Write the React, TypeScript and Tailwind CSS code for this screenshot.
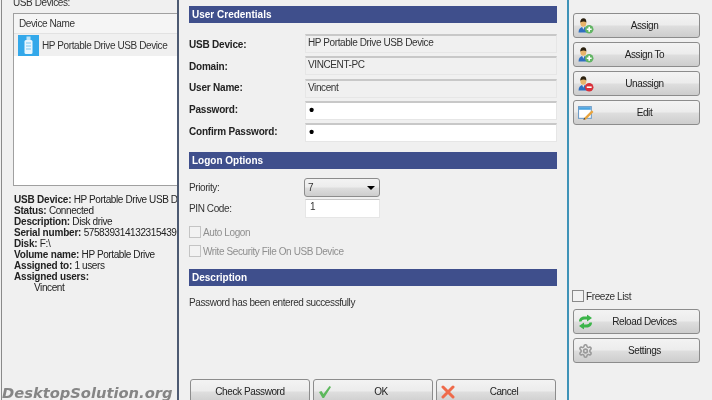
import React from "react";

const FONT = "font-['Liberation_Sans','Noto_Sans',sans-serif]";

function UserIcon({ kind }: { kind: "add" | "remove" }) {
  return (
    <svg width="16" height="16" viewBox="0 0 15 15" className="block">
      <path d="M0.500 13.500c0-3.200 1.700-5 4.500-5s4.500 1.800 4.500 5z" fill="#2f6fc0" />
      <path d="M4 8.500h2L5 11z" fill="#e8e8e8" />
      <ellipse cx="5" cy="4.700" rx="2.800" ry="3.500" fill="#e9b46a" />
      <path d="M2.100 4.200c0-2.500 1.300-3.900 3.100-3.900S8 1.700 7.800 4.200C6.500 3 4 3 2.100 4.200z" fill="#2b2110" />
      <circle cx="10.500" cy="10.500" r="4" fill={kind === "add" ? "#62b564" : "#d8303a"} />
      {kind === "add" ? (
        <path d="M10.500 8.200v4.600M8.200 10.500h4.600" stroke="#fff" strokeWidth="1.500" />
      ) : (
        <path d="M8.200 10.500h4.600" stroke="#fff" strokeWidth="1.500" />
      )}
    </svg>
  );
}

function EditIcon() {
  return (
    <svg width="16" height="16" viewBox="0 0 15 15" className="block">
      <rect x="0.500" y="1.500" width="12" height="11" fill="#fff" stroke="#6d9cc8" />
      <rect x="1" y="2" width="11" height="2.500" fill="#4aa3e0" />
      <path d="M6 12l7-7 1.500 1.500-7 7-2 .5z" fill="#e8a33c" />
      <path d="M5 14l.8-2 1.200 1.200z" fill="#444" />
    </svg>
  );
}

function ReloadIcon() {
  return (
    <svg width="15" height="15" viewBox="0 0 15 15" className="block">
      <path d="M1 7C1 3.800 3.500 2 6.500 2H9V0l5 3.500L9 7V5H6.500C4.800 5 3.800 5.800 3.500 7z" fill="#3cb54a" />
      <path d="M14 8c0 3.200-2.500 5-5.500 5H6v2l-5-3.500L6 8v2h2.500c1.700 0 2.700-.8 3-2z" fill="#3cb54a" />
    </svg>
  );
}

function GearIcon() {
  return (
    <svg width="15" height="15" viewBox="0 0 24 24" fill="none" stroke="#9a9a9a" strokeWidth="2.500" className="block">
      <path d="M12.220 2h-.44a2 2 0 0 0-2 2v.18a2 2 0 0 1-1 1.730l-.43.250a2 2 0 0 1-2 0l-.15-.080a2 2 0 0 0-2.730.730l-.22.380a2 2 0 0 0 .730 2.730l.150.100a2 2 0 0 1 1 1.720v.510a2 2 0 0 1-1 1.740l-.150.090a2 2 0 0 0-.730 2.730l.220.380a2 2 0 0 0 2.730.730l.150-.080a2 2 0 0 1 2 0l.43.250a2 2 0 0 1 1 1.730V20a2 2 0 0 0 2 2h.440a2 2 0 0 0 2-2v-.18a2 2 0 0 1 1-1.730l.43-.250a2 2 0 0 1 2 0l.15.080a2 2 0 0 0 2.730-.730l.22-.390a2 2 0 0 0-.730-2.730l-.150-.080a2 2 0 0 1-1-1.740v-.500a2 2 0 0 1 1-1.740l.150-.090a2 2 0 0 0 .730-2.730l-.220-.380a2 2 0 0 0-2.730-.730l-.150.080a2 2 0 0 1-2 0l-.43-.250a2 2 0 0 1-1-1.730V4a2 2 0 0 0-2-2z" />
      <circle cx="12" cy="12" r="3" />
    </svg>
  );
}

function CheckIcon() {
  return (
    <svg width="14" height="14" viewBox="0 0 14 14" className="block">
      <path d="M1 7l2.500-1 2 3L11.500 1 13 2 6 13H4.500z" fill="#5cb85c" />
    </svg>
  );
}

function CrossIcon() {
  return (
    <svg width="14" height="14" viewBox="0 0 14 14" className="block">
      <path d="M2 2l10 10M12 2L2 12" stroke="#ef6a4a" strokeWidth="3" strokeLinecap="round" />
    </svg>
  );
}

function UsbIcon() {
  return (
    <div className="w-[21px] h-[21px] bg-[#33a8ea] flex items-center justify-center shrink-0">
      <svg width="9" height="19" viewBox="0 0 9 19">
        <rect x="2.500" y="0.500" width="4" height="4" fill="#bfe5fa" />
        <rect x="0.500" y="4" width="8" height="14" rx="1.500" fill="#e8f6fe" />
        <path d="M2 7h5M2 10h5M2 13h5" stroke="#7cc6f0" strokeWidth="1" />
      </svg>
    </div>
  );
}

function Btn({ icon, label, className }: { icon?: React.ReactNode; label: string; className: string }) {
  return (
    <div
      className={`relative flex items-center justify-center border border-[#8c8c8c] rounded-[3px] bg-[linear-gradient(#f3f3f3,#ececec_48%,#dedede_52%,#cdcdcd)] text-[10px] tracking-[-0.4px] text-[#222] ${icon ? "pl-[16px]" : ""} ${className}`}
    >
      {icon && <span className="absolute left-[4px] top-1/2 -translate-y-1/2">{icon}</span>}
      <span>{label}</span>
    </div>
  );
}

function SectionHeader({ label, className }: { label: string; className: string }) {
  return (
    <div className={`h-[17px] bg-[#3f4f8c] text-white font-bold text-[10px] leading-[17px] pl-[3px] ${className}`}>
      {label}
    </div>
  );
}

function CredRow({
  label,
  value,
  white,
  gap,
  labelShift,
}: {
  label: string;
  value: string;
  white?: boolean;
  gap: string;
  labelShift: string;
}) {
  return (
    <div className={`flex items-center ${gap}`}>
      <div className={`w-[116px] font-bold text-[10px] tracking-[-0.2px] text-[#222] shrink-0 ${labelShift}`}>{label}</div>
      <div
        className={`w-[252px] h-[19px] border-t-2 border-[#c8c8c8] border-x border-b border-x-[#e6e6e6] border-b-[#e6e6e6] pl-[2px] text-[#333] ${
          white
            ? "bg-white text-[15px] leading-[14px] font-bold text-black pl-[3px]"
            : "bg-[#f0f0f0] text-[10px] tracking-[-0.4px] leading-[14px]"
        }`}
      >
        {value}
      </div>
    </div>
  );
}

function Check({ label, disabled }: { label: string; disabled?: boolean }) {
  return (
    <div className={`flex items-center h-[12px] gap-[2px] text-[10px] tracking-[-0.4px] ${disabled ? "text-[#8f8f8f]" : "text-[#333]"}`}>
      <div className={`w-[12px] h-[12px] border ${disabled ? "border-[#c4c4c4]" : "border-[#8a8a8a]"} bg-[#f2f2f2]`} />
      <span>{label}</span>
    </div>
  );
}

function Info({ k, v }: { k: string; v: string }) {
  return (
    <div className="whitespace-nowrap h-[11px] leading-[11px] text-[10px] tracking-[-0.4px]">
      <b className="font-bold tracking-[-0.2px]">{k}</b> {v}
    </div>
  );
}

export default function App() {
  return (
    <div className={`w-[712px] h-[400px] overflow-hidden flex bg-[#f0f0f0] blur-[0.3px] ${FONT}`}>
      {/* left panel */}
      <div className="w-[176px] shrink-0 h-full overflow-hidden border-l border-[#8a8a8a] ml-px relative">
        <div className="pl-[11px] -mt-[4px] text-[10px] tracking-[-0.4px] leading-[14px] text-[#333]">USB Devices:</div>
        <div className="ml-[11px] mt-[3px] w-[200px] h-[173px] bg-white border border-[#a0a0a0]">
          <div className="h-[20px] bg-[#f5f5f5] border-b border-[#e2e2e2] pl-[5px] text-[10px] tracking-[-0.4px] leading-[19px] text-[#333]">
            Device Name
          </div>
          <div className="h-[22px] bg-[#f0f0f0] flex items-center pl-[4px] gap-[3px] text-[10px] tracking-[-0.4px] text-[#333]">
            <UsbIcon />
            <span>HP Portable Drive USB Device</span>
          </div>
        </div>
        <div className="pl-[12px] mt-[8px] flex flex-col text-[#222]">
          <Info k="USB Device:" v="HP Portable Drive USB Device" />
          <Info k="Status:" v="Connected" />
          <Info k="Description:" v="Disk drive" />
          <Info k="Serial number:" v="57583931413231543905" />
          <Info k="Disk:" v="F:\" />
          <Info k="Volume name:" v="HP Portable Drive" />
          <Info k="Assigned to:" v="1 users" />
          <Info k="Assigned users:" v="" />
          <div className="pl-[20px] h-[11px] leading-[11px] text-[10px] tracking-[-0.4px]">Vincent</div>
        </div>
        <div className="absolute left-[0px] bottom-[-2px] font-['DejaVu_Sans',sans-serif] font-bold italic text-[14.700px] leading-[18px] text-[#858585] whitespace-nowrap">
          DesktopSolution.org
        </div>
      </div>

      {/* dialog */}
      <div className="w-[392px] shrink-0 h-full border-x-2 border-l-[#4d5a72] border-r-[#3f93b8] pl-[10px] pt-[6px] flex flex-col">
        <SectionHeader label="User Credentials" className="w-[368px]" />
        <CredRow label="USB Device:" value="HP Portable Drive USB Device" gap="mt-[11px]" labelShift="pt-px" />
        <CredRow label="Domain:" value="VINCENT-PC" gap="mt-[3px]" labelShift="pt-[2px]" />
        <CredRow label="User Name:" value="Vincent" gap="mt-[4px]" labelShift="pb-[2px]" />
        <CredRow label="Password:" value="•" white gap="mt-[3px]" labelShift="pb-[2px]" />
        <CredRow label="Confirm Password:" value="•" white gap="mt-[3px]" labelShift="pb-[2px]" />
        <SectionHeader label="Logon Options" className="w-[368px] mt-[10px]" />
        <div className="flex items-center mt-[9px] h-[19px] text-[10px] tracking-[-0.4px] text-[#333]">
          <div className="w-[115px]">Priority:</div>
          <div className="w-[76px] h-[19px] border border-[#8c8c8c] rounded-[3px] bg-[linear-gradient(#f3f3f3,#ececec_48%,#dedede_52%,#cdcdcd)] flex items-center justify-between pl-[3px] pr-[4px]">
            <span>7</span>
            <span className="w-0 h-0 border-x-[4px] border-x-transparent border-t-[4px] border-t-black" />
          </div>
        </div>
        <div className="flex items-center mt-[2px] text-[10px] tracking-[-0.4px] text-[#333]">
          <div className="w-[116px]">PIN Code:</div>
          <div className="w-[75px] h-[19px] bg-white border border-[#e6e6e6] border-t-[#c8c8c8] pl-[4px] leading-[14px]">1</div>
        </div>
        <div className="mt-[8px]">
          <Check label="Auto Logon" disabled />
        </div>
        <div className="mt-[7px]">
          <Check label="Write Security File On USB Device" disabled />
        </div>
        <SectionHeader label="Description" className="w-[368px] mt-[12px] h-[18px]" />
        <div className="mt-[11px] text-[10px] tracking-[-0.4px] leading-[12px] text-[#333]">Password has been entered successfully</div>
        <div className="mt-[70px] flex gap-[3px] ml-px">
          <Btn label="Check Password" className="w-[120px] h-[25px] shrink-0" />
          <Btn label="OK" icon={<CheckIcon />} className="w-[120px] h-[25px] shrink-0" />
          <Btn label="Cancel" icon={<CrossIcon />} className="w-[120px] h-[25px] shrink-0" />
        </div>
      </div>

      {/* right panel */}
      <div className="flex-1 h-full pl-[4px] pt-[13px] flex flex-col bg-[#f0f0f0]">
        <div className="flex flex-col gap-[4px]">
          <Btn label="Assign" icon={<UserIcon kind="add" />} className="w-[127px] h-[25px]" />
          <Btn label="Assign To" icon={<UserIcon kind="add" />} className="w-[127px] h-[25px]" />
          <Btn label="Unassign" icon={<UserIcon kind="remove" />} className="w-[127px] h-[25px]" />
          <Btn label="Edit" icon={<EditIcon />} className="w-[127px] h-[25px]" />
        </div>
        <div className="mt-[165px] -ml-px">
          <Check label="Freeze List" />
        </div>
        <div className="flex flex-col gap-[4px] mt-[7px]">
          <Btn label="Reload Devices" icon={<ReloadIcon />} className="w-[127px] h-[25px]" />
          <Btn label="Settings" icon={<GearIcon />} className="w-[127px] h-[25px]" />
        </div>
      </div>
    </div>
  );
}
